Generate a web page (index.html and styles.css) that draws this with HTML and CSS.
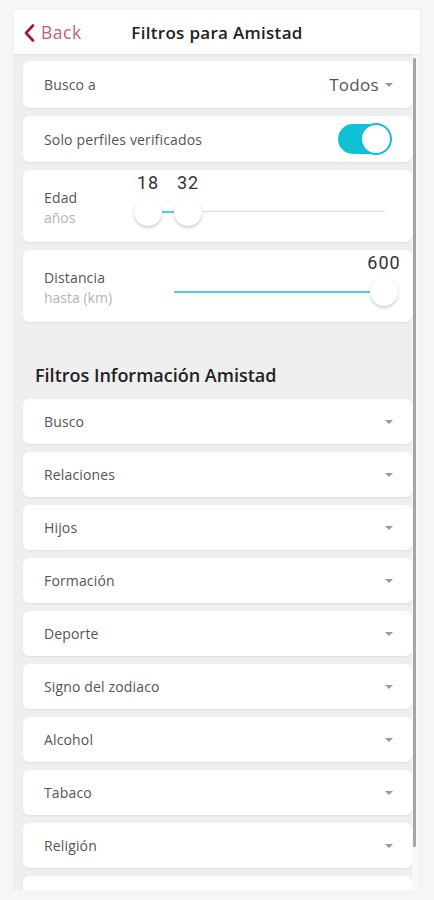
FILE: index.html
```html
<!DOCTYPE html>
<html lang="es">
<head>
    <meta charset="UTF-8">
    <meta name="viewport" content="width=device-width, initial-scale=1.0">
    <title>Filtros para Amistad</title>
    <link rel="stylesheet" href="styles.css">
</head>
<body>
    <div class="phone">
        <header class="topbar">
            <a class="back" href="#">
                <svg width="13" height="18" viewBox="0 0 13 18"><path d="M10 1.5 L3 9 L10 16.5" fill="none" stroke="#a3173e" stroke-width="2.6" stroke-linecap="round" stroke-linejoin="round"/></svg>
                <span>Back</span>
            </a>
            <h1>Filtros para Amistad</h1>
        </header>

        <div class="screen">
            <div class="list">
                <div class="card row">
                    <span class="label">Busco a</span>
                    <span class="select">Todos <i class="caret"></i></span>
                </div>

                <div class="card row toggle-row">
                    <span class="label">Solo perfiles verificados</span>
                    <span class="toggle"><span class="knob"></span></span>
                </div>

                <div class="card range">
                    <div class="range-label">
                        <span class="label">Edad</span>
                        <span class="sub">años</span>
                    </div>
                    <div class="slider">
                        <div class="track"></div>
                        <div class="fill" style="left: 28px; width: 12px;"></div>
                        <div class="thumb" style="left: 0px;"><span class="val">18</span></div>
                        <div class="thumb" style="left: 40px;"><span class="val">32</span></div>
                    </div>
                </div>

                <div class="card range">
                    <div class="range-label">
                        <span class="label">Distancia</span>
                        <span class="sub">hasta (km)</span>
                    </div>
                    <div class="slider">
                        <div class="fill" style="left: 40px; width: 210px;"></div>
                        <div class="thumb" style="left: 236px;"><span class="val">600</span></div>
                    </div>
                </div>

                <h2>Filtros Información Amistad</h2>

                <div class="card row drop"><span class="label">Busco</span><i class="caret"></i></div>
                <div class="card row drop"><span class="label">Relaciones</span><i class="caret"></i></div>
                <div class="card row drop"><span class="label">Hijos</span><i class="caret"></i></div>
                <div class="card row drop"><span class="label">Formación</span><i class="caret"></i></div>
                <div class="card row drop"><span class="label">Deporte</span><i class="caret"></i></div>
                <div class="card row drop"><span class="label">Signo del zodiaco</span><i class="caret"></i></div>
                <div class="card row drop"><span class="label">Alcohol</span><i class="caret"></i></div>
                <div class="card row drop"><span class="label">Tabaco</span><i class="caret"></i></div>
                <div class="card row drop"><span class="label">Religión</span><i class="caret"></i></div>
                <div class="card row drop"></div>
            </div>
            <div class="scrollbar"><div class="thumb-bar"></div></div>
        </div>
    </div>
</body>
</html>
```

FILE: styles.css
```css
body {
    margin: 0;
    background-color: #f6f6f6;
    font-family: "Open Sans", "Noto Sans", sans-serif;
    color: #555;
}
.phone {
    width: 406px;
    height: 880px;
    margin: 10px 0 0 14px;
    background: #efefef;
    overflow: hidden;
    box-shadow: 0 0 4px rgba(0, 0, 0, 0.06);
    display: flex;
    flex-direction: column;
}
.topbar {
    height: 44px;
    flex-shrink: 0;
    background: white;
    position: relative;
    display: flex;
    align-items: center;
    justify-content: center;
    box-shadow: 0 1px 2px rgba(0, 0, 0, 0.08);
    z-index: 1;
}
.back {
    position: absolute;
    left: 9px;
    top: 0;
    height: 44px;
    display: flex;
    align-items: center;
    gap: 5px;
    text-decoration: none;
    color: #c2607c;
    font-size: 17.5px;
    letter-spacing: 0.5px;
}
.back svg {
    margin-top: 1px;
}
.topbar h1 {
    margin: 0;
    font-size: 17px;
    font-weight: 600;
    letter-spacing: 0.3px;
    color: #222;
}
.screen {
    flex: 1;
    display: flex;
    min-height: 0;
}
.list {
    flex: 1;
    padding: 7px 0 0 9px;
    display: flex;
    flex-direction: column;
    gap: 8px;
}
.scrollbar {
    width: 8px;
    flex-shrink: 0;
    background: #f8f8f8;
}
.thumb-bar {
    width: 3px;
    height: 789px;
    margin: 4px 0 0 1px;
    background: #a5a5a5;
    border-radius: 1px;
}
.card {
    background: white;
    border-radius: 6px;
    box-shadow: 0 1px 2px rgba(0, 0, 0, 0.07);
    flex-shrink: 0;
}
.row {
    display: flex;
    align-items: center;
    justify-content: space-between;
    padding: 0 19px 0 21px;
    height: 47px;
}
.toggle-row {
    height: 46px;
    padding-right: 21px;
}
.drop {
    height: 45px;
}
.label {
    font-size: 14px;
    letter-spacing: 0.15px;
    color: #555;
}
.select {
    display: flex;
    align-items: center;
    gap: 6px;
    font-size: 17px;
    letter-spacing: 0.3px;
    color: #555;
}
.caret {
    width: 0;
    height: 0;
    border-left: 4px solid transparent;
    border-right: 4px solid transparent;
    border-top: 4px solid #9a9a9a;
}
.toggle {
    width: 53px;
    height: 30px;
    border-radius: 15px;
    background: #10c1d6;
    position: relative;
}
.knob {
    position: absolute;
    right: -1px;
    top: -1px;
    width: 28px;
    height: 28px;
    border-radius: 50%;
    background: white;
    border: 2px solid #10c1d6;
}
.range {
    height: 72px;
    display: flex;
    align-items: center;
    padding-left: 21px;
}
.range-label {
    width: 90px;
    display: flex;
    flex-direction: column;
    gap: 1px;
    padding-top: 2px;
}
.sub {
    font-size: 14px;
    color: #b4b4b4;
}
.slider {
    flex: 1;
    align-self: stretch;
    position: relative;
}
.track {
    position: absolute;
    left: 14px;
    right: 27px;
    top: 41px;
    height: 1px;
    background: #dcdcdc;
}
.fill {
    position: absolute;
    top: 41px;
    height: 2px;
    background: #4fd0e0;
}
.thumb {
    position: absolute;
    top: 28px;
    width: 28px;
    height: 28px;
    border-radius: 50%;
    background: white;
    box-shadow: 0 2px 3px rgba(0, 0, 0, 0.18), 0 0 1px rgba(0, 0, 0, 0.1);
}
.val {
    position: absolute;
    bottom: 100%;
    left: 50%;
    transform: translateX(-50%);
    margin-bottom: 5px;
    font-family: Roboto, sans-serif;
    font-size: 18px;
    line-height: 20px;
    color: #333;
    letter-spacing: 1px;
}
.list h2 {
    margin: 0;
    padding: 35px 0 6px 12px;
    font-size: 18px;
    line-height: 20px;
    font-weight: 600;
    color: #222;
}
```
